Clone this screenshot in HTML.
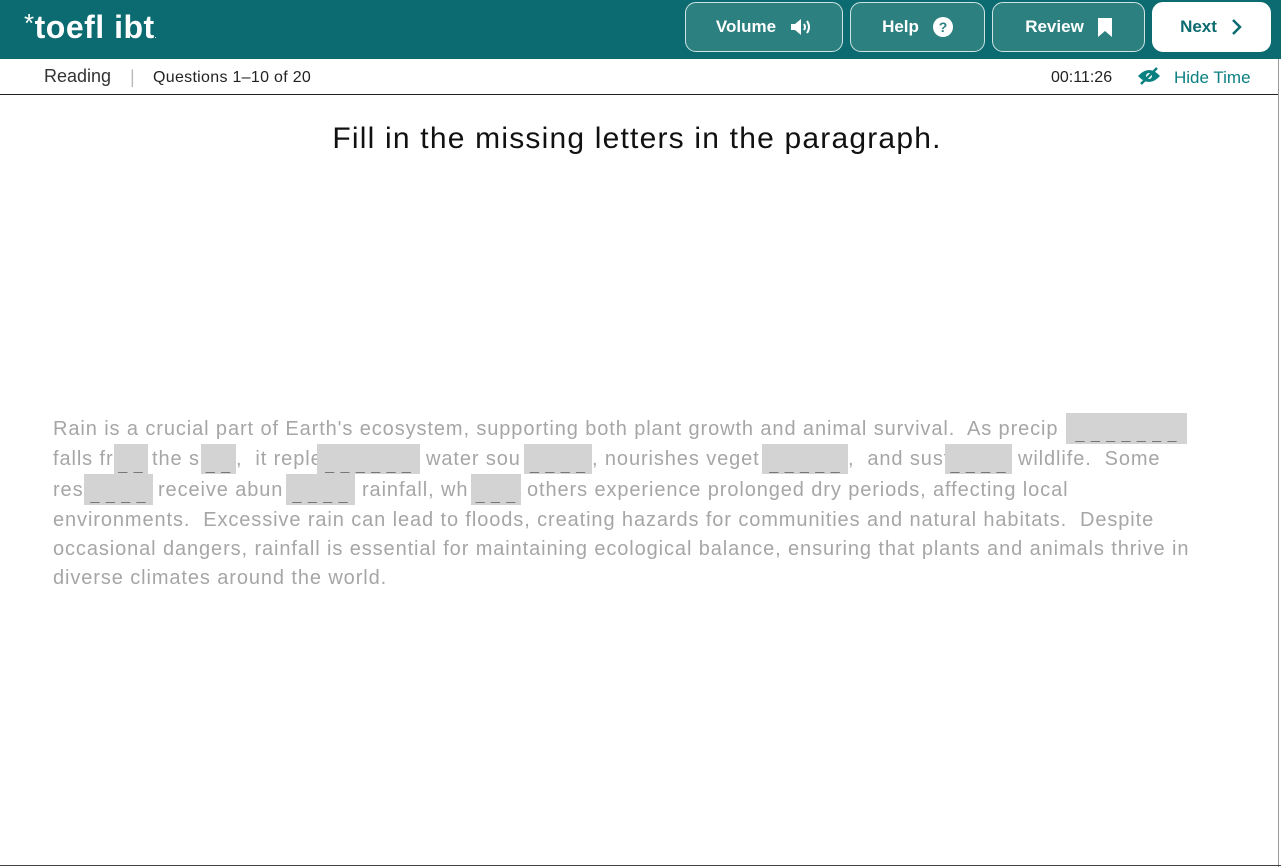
<!DOCTYPE html>
<html><head><meta charset="utf-8"><style>
*{margin:0;padding:0;box-sizing:border-box}
body{width:1281px;height:867px;background:#fff;font-family:"Liberation Sans",sans-serif;position:relative;overflow:hidden}
.hdr{position:absolute;left:0;top:0;width:1281px;height:59px;background:#0b6b70}
.logo{position:absolute;left:24px;top:8px;color:#fff;font-size:32px;font-weight:bold;letter-spacing:0.5px}
.btn{position:absolute;top:2px;height:50px;border:1px solid #cfe3e3;border-radius:11px;background:#2d8080;color:#fff;font-weight:bold;font-size:17px;display:flex;align-items:center;justify-content:center;gap:14px}
.sub{position:absolute;left:0;top:59px;width:1279px;height:36px;border-bottom:1px solid #222}
.t{position:absolute;white-space:nowrap}
.line{position:absolute;left:53px;font-size:20px;letter-spacing:0.9px;color:#a6a6a6;white-space:nowrap;height:30px;line-height:30px}
.b{position:absolute;background:#d3d3d3;color:#777;font-size:16px;text-align:center;line-height:44px;overflow:hidden;letter-spacing:1px}
</style></head><body>
<div class="hdr">
<div class="logo"><span style="font-size:26px;vertical-align:6px;font-weight:normal">*</span>toefl ibt<span style="font-size:6px">.</span></div>
<div class="btn" style="left:685px;width:158px">Volume <svg width="22" height="18" viewBox="0 0 22 18"><path d="M1 6h4l6-5v16l-6-5H1z" fill="#fff"/><path d="M14 6q2 3 0 6M17 3q4 6 0 12" stroke="#fff" stroke-width="2" fill="none"/></svg></div>
<div class="btn" style="left:850px;width:135px">Help <svg width="20" height="20" viewBox="0 0 20 20"><circle cx="10" cy="10" r="10" fill="#fff"/><text x="10" y="15" text-anchor="middle" font-size="14" font-weight="bold" fill="#2d8080" font-family="Liberation Sans">?</text></svg></div>
<div class="btn" style="left:992px;width:153px">Review <svg width="14" height="19" viewBox="0 0 14 19"><path d="M0 0h14v19l-7-6-7 6z" fill="#fff"/></svg></div>
<div class="btn" style="left:1152px;width:119px;background:#fff;color:#0b6b70;border-color:#fff">Next <svg width="12" height="18" viewBox="0 0 12 18"><path d="M2 2l7 7-7 7" stroke="#0b6b70" stroke-width="2.5" fill="none"/></svg></div>
</div>
<div class="sub">
<div class="t" style="left:44px;top:7px;font-size:18px;color:#333">Reading</div>
<div class="t" style="left:130px;top:8px;font-size:18px;color:#bbb">|</div>
<div class="t" style="left:153px;top:10px;font-size:16px;color:#222;letter-spacing:0.3px">Questions 1–10 of 20</div>
<div class="t" style="left:1051px;top:10px;font-size:16px;color:#222">00:11:26</div>
<svg class="t" style="left:1137px;top:8px" width="24" height="18" viewBox="0 0 24 18"><path d="M1 9q11-12 22 0q-11 12-22 0z" fill="#0b8080"/><circle cx="12" cy="9" r="3" fill="#fff"/><path d="M4 17L20 1" stroke="#0b8080" stroke-width="2.5"/></svg>
<div class="t" style="left:1174px;top:9px;font-size:17px;color:#0b7f80">Hide Time</div>
</div>
<div style="position:absolute;right:2px;top:59px;width:1px;height:808px;background:#999"></div>
<div style="position:absolute;left:0;top:865px;width:1281px;height:1px;background:#444"></div>
<div class="t" style="left:0;width:1274px;text-align:center;top:122px;font-size:30px;letter-spacing:1.2px;color:#111">Fill in the missing letters in the paragraph.</div>

<div class="line" style="top:414px">Rain is a crucial part of Earth's ecosystem, supporting both plant growth and animal survival.&nbsp; As precip</div>
<div class="line" style="top:444px">falls fr</div>
<div class="line" style="top:444px;left:152px">the s</div>
<div class="line" style="top:444px;left:236px">,&nbsp; it reple</div>
<div class="line" style="top:444px;left:426px">water sou</div>
<div class="line" style="top:444px;left:592px">, nourishes veget</div>
<div class="line" style="top:444px;left:848px">,&nbsp; and sust</div>
<div class="line" style="top:444px;left:1018px">wildlife.&nbsp; Some</div>
<div class="line" style="top:475px">res</div>
<div class="line" style="top:475px;left:158px">receive abun</div>
<div class="line" style="top:475px;left:362px">rainfall, wh</div>
<div class="line" style="top:475px;left:527px">others experience prolonged dry periods, affecting local</div>
<div class="line" style="top:505px">environments.&nbsp; Excessive rain can lead to floods, creating hazards for communities and natural habitats.&nbsp; Despite</div>
<div class="line" style="top:534px">occasional dangers, rainfall is essential for maintaining ecological balance, ensuring that plants and animals thrive in</div>
<div class="line" style="top:563px">diverse climates around the world.</div>

<div class="b" style="left:1066px;top:413px;width:121px;height:31px">_ _ _ _ _ _ _</div>
<div class="b" style="left:114px;top:444px;width:34px;height:30px">_ _</div>
<div class="b" style="left:201px;top:444px;width:35px;height:30px">_ _</div>
<div class="b" style="left:317px;top:444px;width:103px;height:30px">_ _ _ _ _ _</div>
<div class="b" style="left:524px;top:444px;width:68px;height:30px">_ _ _ _</div>
<div class="b" style="left:762px;top:444px;width:86px;height:30px">_ _ _ _ _</div>
<div class="b" style="left:945px;top:444px;width:67px;height:30px">_ _ _ _</div>
<div class="b" style="left:84px;top:474px;width:69px;height:31px">_ _ _ _</div>
<div class="b" style="left:286px;top:474px;width:69px;height:31px">_ _ _ _</div>
<div class="b" style="left:471px;top:474px;width:50px;height:31px">_ _ _</div>
</body></html>
